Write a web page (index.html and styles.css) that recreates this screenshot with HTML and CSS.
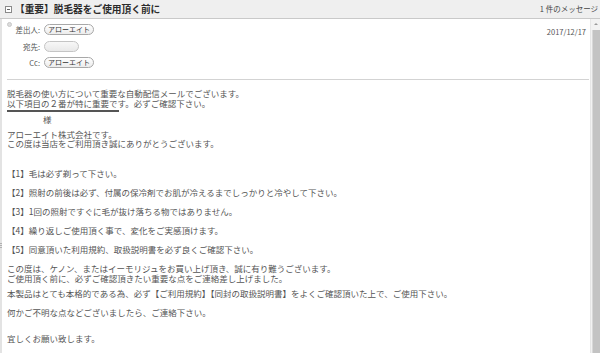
FILE: index.html
```html
<!DOCTYPE html>
<html lang="ja">
<head>
<meta charset="utf-8">
<title>【重要】脱毛器をご使用頂く前に</title>
<link rel="stylesheet" href="styles.css">
</head>
<body>
<div class="window">
  <div class="titlebar">
    <span class="collapse"></span>
    <h1 class="subject">【重要】脱毛器をご使用頂く前に</h1>
    <span class="count">1 件のメッセージ</span>
  </div>
  <div class="main">
    <div class="rail"><span class="grip"></span></div>
    <div class="pane">
      <div class="msghead">
        <div class="fields">
          <div class="row">
            <span class="label"><span class="dot"></span>差出人:</span>
            <span class="chip">アローエイト</span>
          </div>
          <div class="row">
            <span class="label">宛先:</span>
            <span class="chip chip-empty"></span>
          </div>
          <div class="row">
            <span class="label">Cc:</span>
            <span class="chip">アローエイト</span>
          </div>
        </div>
        <div class="date">2017/12/17</div>
      </div>
      <div class="rule"></div>
      <div class="body">
        <p class="para">脱毛器の使い方について重要な自動配信メールでございます。<br>以下項目の２番が特に重要です。必ずご確認下さい。</p>
        <div class="underline"></div>
        <p class="para sama">様</p>
        <p class="para greet">アローエイト株式会社です。<br>この度は当店をご利用頂き誠にありがとうございます。</p>
        <ol class="items">
          <li>【1】毛は必ず剃って下さい。</li>
          <li>【2】照射の前後は必ず、付属の保冷剤でお肌が冷えるまでしっかりと冷やして下さい。</li>
          <li>【3】1回の照射ですぐに毛が抜け落ちる物ではありません。</li>
          <li>【4】繰り返しご使用頂く事で、変化をご実感頂けます。</li>
          <li>【5】同意頂いた利用規約、取扱説明書を必ず良くご確認下さい。</li>
        </ol>
        <p class="para thanks">この度は、ケノン、またはイーモリジュをお買い上げ頂き、誠に有り難うございます。<br>ご使用頂く前に、必ずご確認頂きたい重要な点をご連絡差し上げました。</p>
        <p class="para note first-note">本製品はとても本格的である為、必ず【ご利用規約】【同封の取扱説明書】をよくご確認頂いた上で、ご使用下さい。</p>
        <p class="para note">何かご不明な点などございましたら、ご連絡下さい。</p>
        <p class="para closing">宜しくお願い致します。</p>
      </div>
    </div>
    <div class="scrollbar">
      <span class="arrow"></span>
      <span class="thumb"></span>
    </div>
  </div>
</div>
</body>
</html>
```
FILE: styles.css
```css
html, body {
  margin: 0;
  padding: 0;
  background: #ffffff;
}
body {
  width: 600px;
  height: 353px;
  overflow: hidden;
  font-family: "Noto Sans CJK JP", "Noto Sans", sans-serif;
  color: #555;
}
.window {
  display: flex;
  flex-direction: column;
  height: 353px;
}
.titlebar {
  display: flex;
  align-items: center;
  height: 18px;
  background: #efefef;
  border-bottom: 1px solid #c9c9c9;
  padding-left: 5px;
  padding-right: 2px;
  flex: none;
}
.collapse {
  width: 5px;
  height: 5px;
  border: 1px solid #8a8a8a;
  position: relative;
  flex: none;
  background: #fff;
}
.collapse::after {
  content: "";
  position: absolute;
  left: 1px;
  top: 2px;
  width: 3px;
  height: 1px;
  background: #666;
}
.subject {
  margin: 0 0 0 3px;
  font-size: 9.7px;
  font-weight: bold;
  color: #2b2b2b;
  line-height: 18px;
  flex: 1;
}
.count {
  font-size: 7.5px;
  color: #444;
  line-height: 18px;
}
.main {
  display: flex;
  flex: 1;
  min-height: 0;
}
.rail {
  width: 2px;
  background: #e3e3e3;
  flex: none;
  display: flex;
  flex-direction: column;
}
.grip {
  margin-top: 224px;
  width: 3px;
  height: 6px;
  background: repeating-linear-gradient(to bottom, #b0b0b0 0 1px, transparent 1px 2px);
}
.pane {
  flex: 1;
  min-width: 0;
  padding: 0 1px 0 5px;
  background: #fff;
}
.msghead {
  display: flex;
  justify-content: space-between;
  padding-top: 5px;
  height: 55px;
}
.fields {
  display: flex;
  flex-direction: column;
  gap: 5.5px;
}
.row {
  display: flex;
  align-items: center;
  gap: 4px;
  height: 11px;
}
.label {
  width: 33px;
  display: flex;
  justify-content: flex-end;
  align-items: center;
  position: relative;
  font-size: 7.5px;
  color: #555;
}
.dot {
  position: absolute;
  left: 0;
  top: -2px;
  width: 5px;
  height: 5px;
  border-radius: 50%;
  background: #dcdcdc;
  border: 1px solid #c8c8c8;
  box-sizing: border-box;
}
.chip {
  display: inline-flex;
  align-items: center;
  height: 11px;
  box-sizing: border-box;
  padding: 0 3px;
  border: 1px solid #a8a8a8;
  border-radius: 6px;
  background: linear-gradient(#ffffff, #ececec);
  font-size: 7px;
  color: #333;
  line-height: 9px;
}
.chip-empty {
  width: 35px;
  border-color: #c4c4c4;
  background: linear-gradient(#f7f7f7, #e9e9e9);
}
.date {
  font-size: 7.5px;
  color: #555;
  padding-right: 3px;
  padding-top: 3px;
  line-height: 10px;
}
.rule {
  height: 1px;
  background: #d3d3d3;
}
.body {
  padding-top: 9px;
  font-size: 8.5px;
  line-height: 9.5px;
  color: #555;
}
.para {
  margin: 0;
}
.underline {
  width: 112px;
  height: 2px;
  background: #555;
  margin-top: 2px;
}
.sama {
  padding-left: 36px;
  margin-top: 3px;
}
.greet {
  margin-top: 5px;
}
.items {
  list-style: none;
  margin: 20px 0 0;
  padding: 0;
  display: flex;
  flex-direction: column;
  gap: 9.5px;
}
.thanks {
  margin-top: 10px;
}
.note {
  margin-top: 9.5px;
}
.first-note {
  margin-top: 6px;
}
.closing {
  margin-top: 16px;
}
.scrollbar {
  width: 9px;
  flex: none;
  border-left: 1px solid #e6e6e6;
  background: #f2f2f2;
  display: flex;
  flex-direction: column;
  align-items: stretch;
}
.arrow {
  height: 11px;
  flex: none;
  position: relative;
}
.arrow::after {
  content: "";
  position: absolute;
  left: 3px;
  top: 4px;
  border-left: 2px solid transparent;
  border-right: 2px solid transparent;
  border-bottom: 2px solid #9a9a9a;
}
.thumb {
  flex: 1;
  margin-left: 1px;
  background: #c3c3c3;
  border-left: 1px solid #d8d8d8;
}
```
